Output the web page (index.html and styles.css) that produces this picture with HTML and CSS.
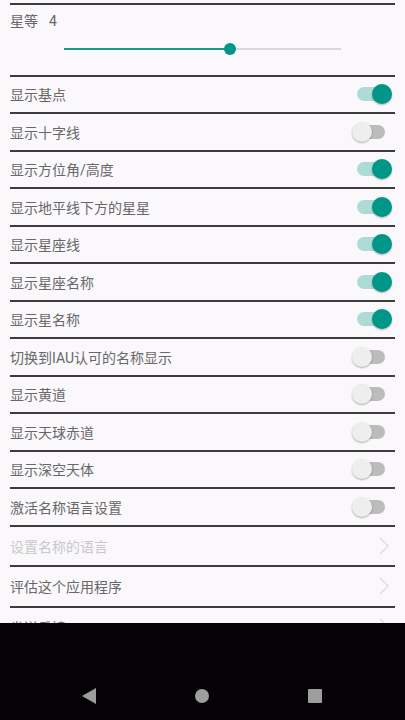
FILE: index.html
```html
<!DOCTYPE html>
<html lang="zh-CN">
<head>
    <meta charset="UTF-8">
    <meta name="viewport" content="width=device-width, initial-scale=1.0">
    <title>设置</title>
    <link rel="stylesheet" href="styles.css">
</head>
<body>
    <div class="screen">
        <div class="settings">
            <!-- 星等滑块 -->
            <div class="magnitude">
                <div class="mag-label">星等<span class="mag-value">4</span></div>
                <div class="slider">
                    <div class="slider-track"></div>
                    <div class="slider-fill" style="width: 60%"></div>
                    <div class="slider-thumb" style="left: 60%"></div>
                </div>
            </div>

            <div class="row"><span>显示基点</span><div class="switch on"><i></i><b></b></div></div>
            <div class="row"><span>显示十字线</span><div class="switch"><i></i><b></b></div></div>
            <div class="row"><span>显示方位角/高度</span><div class="switch on"><i></i><b></b></div></div>
            <div class="row"><span>显示地平线下方的星星</span><div class="switch on"><i></i><b></b></div></div>
            <div class="row"><span>显示星座线</span><div class="switch on"><i></i><b></b></div></div>
            <div class="row"><span>显示星座名称</span><div class="switch on"><i></i><b></b></div></div>
            <div class="row"><span>显示星名称</span><div class="switch on"><i></i><b></b></div></div>
            <div class="row"><span>切换到IAU认可的名称显示</span><div class="switch"><i></i><b></b></div></div>
            <div class="row"><span>显示黄道</span><div class="switch"><i></i><b></b></div></div>
            <div class="row"><span>显示天球赤道</span><div class="switch"><i></i><b></b></div></div>
            <div class="row"><span>显示深空天体</span><div class="switch"><i></i><b></b></div></div>
            <div class="row"><span>激活名称语言设置</span><div class="switch"><i></i><b></b></div></div>

            <div class="row link disabled"><span>设置名称的语言</span>
                <svg class="chevron" viewBox="0 0 10 18"><polyline points="1,1 9,9 1,17"/></svg></div>
            <div class="row link"><span>评估这个应用程序</span>
                <svg class="chevron" viewBox="0 0 10 18"><polyline points="1,1 9,9 1,17"/></svg></div>
            <div class="row link"><span>发送反馈</span>
                <svg class="chevron" viewBox="0 0 10 18"><polyline points="1,1 9,9 1,17"/></svg></div>
        </div>
    </div>

    <!-- 系统导航栏 -->
    <div class="navbar">
        <svg class="nav-icon" viewBox="0 0 16 16"><polygon points="15,0 15,16 1,8"/></svg>
        <svg class="nav-icon" viewBox="0 0 16 16"><circle cx="8" cy="8" r="7"/></svg>
        <svg class="nav-icon" viewBox="0 0 16 16"><rect x="1" y="1" width="14" height="14" rx="1"/></svg>
    </div>
</body>
</html>
```

FILE: styles.css
```css
/* 基本布局 */
body {
    margin: 0;
    background-color: #000;
    font-family: Roboto, "Noto Sans CJK SC", sans-serif;
}

.screen {
    height: 623px;
    overflow: hidden;
    background-color: #faf8fb;
    padding-top: 3px;
    box-sizing: border-box;
}

.settings {
    padding: 0 10px;
}

/* 星等滑块 */
.magnitude {
    height: 71.5px;
    border-top: 2px solid #3c3c3c;
    box-sizing: border-box;
}

.mag-label {
    font-size: 14px;
    color: #666;
    padding-top: 6px;
    line-height: 20px;
}

.mag-value {
    margin-left: 11px;
}

.slider {
    position: relative;
    margin: 12px 0 0 54px;
    width: 277px;
    height: 12px;
}

.slider-track {
    position: absolute;
    left: 0;
    right: 0;
    top: 5px;
    height: 2px;
    background-color: #d9d9d9;
}

.slider-fill {
    position: absolute;
    left: 0;
    top: 5px;
    height: 2px;
    background-color: #17998c;
}

.slider-thumb {
    position: absolute;
    top: 0;
    width: 12px;
    height: 12px;
    margin-left: -6px;
    border-radius: 50%;
    background-color: #009688;
}

/* 设置行 */
.row {
    height: 37.5px;
    border-top: 2px solid #3c3c3c;
    box-sizing: border-box;
    display: flex;
    align-items: center;
    justify-content: space-between;
    font-size: 14px;
    color: #686868;
}

.row.link {
    height: 40.5px;
}

.row.disabled {
    color: #c9c9c9;
}

.chevron {
    width: 10px;
    height: 18px;
    margin-right: 6px;
    fill: none;
    stroke: #d9d9d9;
    stroke-width: 1.2;
}

/* 开关 */
.switch {
    position: relative;
    width: 40px;
    height: 20px;
    margin-right: 3px;
}

.switch i {
    position: absolute;
    left: 5px;
    top: 3px;
    width: 28px;
    height: 14px;
    border-radius: 7px;
    background-color: #bcbcbc;
}

.switch b {
    position: absolute;
    left: 0;
    top: 0;
    width: 20px;
    height: 20px;
    border-radius: 50%;
    background-color: #eeeeee;
    box-shadow: 0 1px 2px rgba(0, 0, 0, 0.3);
}

.switch.on i {
    background-color: #acdcd6;
}

.switch.on b {
    left: 20px;
    background-color: #009688;
}

/* 导航栏 */
.navbar {
    height: 97px;
    background-color: #040204;
    display: flex;
    justify-content: space-between;
    align-items: flex-start;
    padding: 65px 82px 0 81px;
    box-sizing: border-box;
}

.nav-icon {
    width: 16px;
    height: 16px;
    fill: #9e9e9e;
}
```
